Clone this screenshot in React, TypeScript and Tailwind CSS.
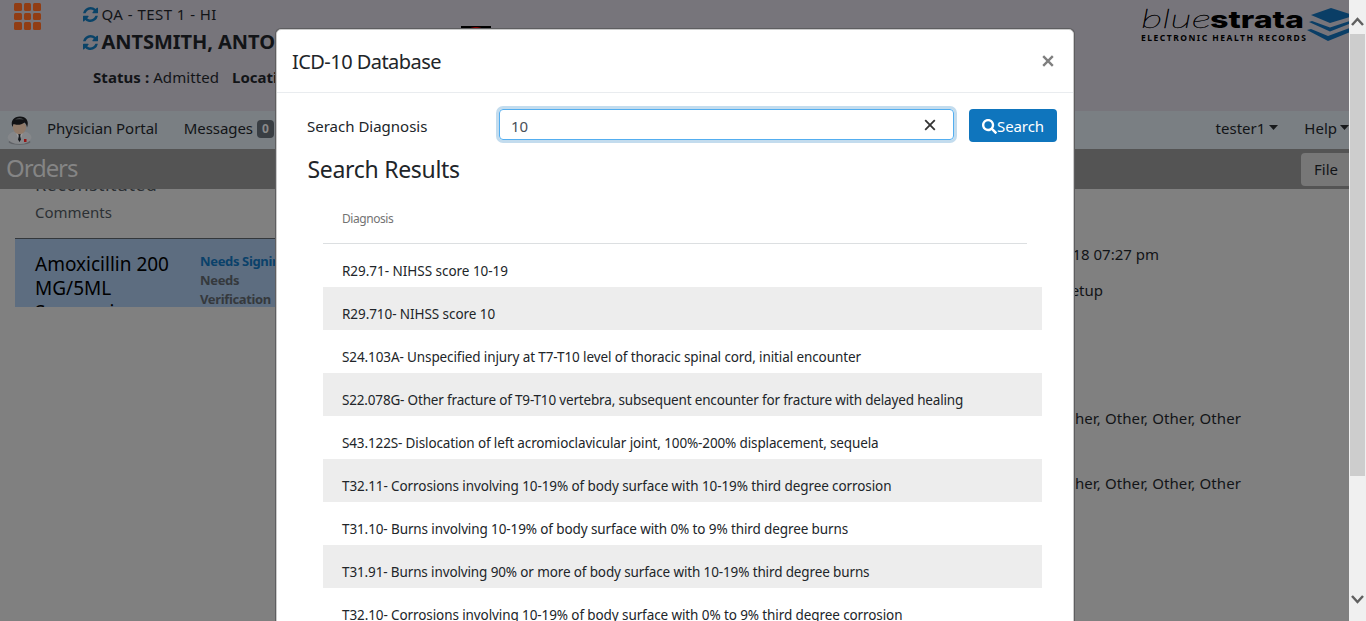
import React from "react";
import { FaSearch } from "react-icons/fa";

const results = [
  { text: "R29.71- NIHSS score 10-19", cls: "tracking-[-0.030px]" },
  { text: "R29.710- NIHSS score 10", cls: "tracking-[-0.070px]" },
  { text: "S24.103A- Unspecified injury at T7-T10 level of thoracic spinal cord, initial encounter", cls: "tracking-[-0.108px]" },
  { text: "S22.078G- Other fracture of T9-T10 vertebra, subsequent encounter for fracture with delayed healing", cls: "tracking-[-0.170px]" },
  { text: "S43.122S- Dislocation of left acromioclavicular joint, 100%-200% displacement, sequela", cls: "tracking-[-0.130px]" },
  { text: "T32.11- Corrosions involving 10-19% of body surface with 10-19% third degree corrosion", cls: "tracking-[-0.095px]" },
  { text: "T31.10- Burns involving 10-19% of body surface with 0% to 9% third degree burns", cls: "tracking-[-0.110px]" },
  { text: "T31.91- Burns involving 90% or more of body surface with 10-19% third degree burns", cls: "tracking-[-0.128px]" },
  { text: "T32.10- Corrosions involving 10-19% of body surface with 0% to 9% third degree corrosion", cls: "tracking-[-0.098px]" },
];

function Refresh() {
  return (
    <svg className="h-[15px] w-[15px] shrink-0" viewBox="0 0 1536 1536" fill="#0a4368">
      <path d="M1511 928q0 5-1 7-64 268-268 434.500T764 1536q-146 0-282.500-55T238 1324l-129 129q-19 19-45 19t-45-19-19-45V960q0-26 19-45t45-19h448q26 0 45 19t19 45-19 45l-137 137q71 66 161 102t187 36q134 0 250-65t186-179q11-17 53-117 8-23 30-23h192q13 0 22.500 9.500t9.500 22.500zm25-800v448q0 26-19 45t-45 19h-448q-26 0-45-19t-19-45 19-45l138-138Q969 256 768 256q-134 0-250 65T332 500q-11 17-53 117-8 23-30 23H50q-13 0-22.500-9.500T18 608v-7q65-268 270-434.500T768 0q146 0 284 55.500T1297 212l130-129q19-19 45-19t45 19 19 45z" />
    </svg>
  );
}

function Doctor() {
  return (
    <svg className="h-[29px] w-[25px] shrink-0" viewBox="0 0 25 29">
      <ellipse cx="12.500" cy="26" rx="11" ry="2.800" fill="#5f6266" />
      <path d="M0.500 22Q1 17 7 15.500L12.500 18.500L18 15.500Q24.500 17 24.500 22Q22 28 12.500 28Q3 28 0.500 22Z" fill="#85878a" />
      <path d="M8.500 15.500L12.500 26L16.500 15.500L12.500 17.500Z" fill="#9c9c9e" />
      <path d="M11.300 18H13.700L13.200 20L14 23.500L12.500 26L11 23.500L11.800 20Z" fill="#15181c" />
      <path d="M6 9Q9 6 13 7Q17 5 19 10Q19.500 15 15.500 17.500Q12.500 19 9.500 17.500Q5.500 15 6 9Z" fill="#907a69" />
      <path d="M5.500 11C3 5 7 0.500 13 0.500C19 0.500 22.500 5 20 11.500C19.800 9 19 8 17.500 6.500C14 9.500 9 9 6.500 8Z" fill="#111214" />
      <path d="M8 3.500Q12.500 0.500 17 3.500Q12.500 2.800 8 3.500Z" fill="#4d5053" />
      <rect x="17" y="23" width="2.500" height="3" fill="#951414" />
    </svg>
  );
}

function Logo() {
  return (
    <svg className="h-[42px] w-[210px] shrink-0" viewBox="0 0 210 42">
      <text x="1" y="28" textLength="70" lengthAdjust="spacingAndGlyphs" className="font-['Lato'] text-[26px] font-thin italic" fill="#000" stroke="#000" strokeWidth="0.4">blue</text>
      <text x="70" y="28" textLength="94" lengthAdjust="spacingAndGlyphs" className="font-['Inter'] text-[24px] font-extrabold" fill="#000">strata</text>
      <text x="1" y="41" textLength="165" className="font-['Noto_Sans'] text-[8.500px] font-bold" fill="#000">ELECTRONIC HEALTH RECORDS</text>
      <g fill="#0a3e66">
        <path d="M171 15L191 8L210 14V17L190 23Z" />
        <path d="M169 22L172 21L190 27.500L210 21V23.500L190 31.500Z" />
        <path d="M167 30L171 29L188 36L210 28V32L188 41Z" />
      </g>
    </svg>
  );
}

function Caret() {
  return (
    <svg className="h-[5px] w-[9px] shrink-0" viewBox="0 0 9 5" fill="#17191b">
      <path d="M0 0H9L4.500 5Z" />
    </svg>
  );
}

function Cross({ className }: { className: string }) {
  return (
    <svg className={className} viewBox="0 0 12 12" fill="none" stroke="currentColor">
      <path d="M1.200 1.200L10.800 10.800M10.800 1.200L1.200 10.800" />
    </svg>
  );
}

export default function App() {
  return (
    <div className="relative flex h-[621px] w-[1366px] overflow-hidden bg-[#808080] font-['Noto_Sans',sans-serif] text-[15px] text-[#121417]">
      <main className="flex w-[1349px] shrink-0 flex-col overflow-hidden">
        <header className="flex h-[111px] shrink-0 bg-[#77757b]">
          <div className="flex w-[461px] shrink-0">
            <div className="grid h-fit grid-cols-3 gap-[2px] pl-[14px] pt-[3px]">
              {Array.from({ length: 9 }, (_, i) => (
                <span key={i} className="h-[7.500px] w-[7.500px] rounded-[1.500px] bg-[#913d14]" />
              ))}
            </div>
            <div className="flex flex-col whitespace-nowrap pl-[42px]">
              <div className="flex h-[28px] items-center gap-1 pt-[1px]">
                <Refresh />
                <span className="tracking-[0.450px]">QA - TEST 1 - HI</span>
              </div>
              <div className="flex h-[28px] items-center gap-1">
                <Refresh />
                <span className="text-[20px] font-bold tracking-[-0.050px]">ANTSMITH, ANTONIO</span>
              </div>
              <div className="flex h-[42px] items-center gap-[13px] pl-[10.500px]">
                <span className="tracking-[0.070px]"><b>Status :</b> Admitted</span>
                <b>Location :</b>
              </div>
            </div>
          </div>
          <div className="mt-[26px] flex h-[30px] w-[30px] justify-center overflow-hidden bg-black">
            <span className="mt-px h-[20px] w-[22px] rounded-full bg-[#850000]" />
          </div>
          <div className="ml-auto flex w-[209px] overflow-hidden"><Logo /></div>
        </header>
        <nav className="flex h-[38px] shrink-0 items-center justify-between whitespace-nowrap bg-[#7a7f83]">
          <div className="flex items-center pb-[3px] pl-[7px]">
            <div className="pt-[4px]"><Doctor /></div>
            <span className="pl-[15px] tracking-[-0.060px]">Physician Portal</span>
            <span className="pl-[26px] tracking-[-0.080px]">Messages</span>
            <span className="ml-1 flex h-[18px] w-[17px] items-center justify-center rounded-[4px] bg-[#393e43] text-[12px] font-bold text-[#8a8a8a]">0</span>
          </div>
          <div className="flex items-center pb-[3px]">
            <span>tester1</span>
            <span className="ml-1 flex pb-[3px]"><Caret /></span>
            <span className="ml-[26px]">Help</span>
            <span className="ml-[3px] flex pb-[3px]"><Caret /></span>
          </div>
        </nav>
        <div className="flex h-10 shrink-0 items-center justify-between bg-[#545454] pl-[6px]">
          <h1 className="pb-[3px] text-[24px] tracking-[-1.100px] text-[#858585]">Orders</h1>
          <div className="flex h-[33px] w-12 items-center rounded-l-[4px] bg-[#777] pl-[13px]">File</div>
        </div>
        <div className="flex grow justify-between">
          <section className="flex h-[118px] w-[300px] flex-col overflow-hidden pl-[15px]">
            <div className="h-[50px] shrink-0 overflow-hidden border-b border-[#33373b] pl-5 text-[#2c3034]">
              <div className="-mt-[17px] h-6 text-[18px] leading-6 tracking-[0.400px]">Reconstituted</div>
              <div className="pt-[4px] leading-6">Comments</div>
            </div>
            <div className="flex h-[68px] shrink-0 overflow-hidden bg-[#5d6d80] pl-5">
              <div className="w-[165px] shrink-0 pt-[13px] text-[19px] leading-6 text-black">Amoxicillin 200<br />MG/5ML<br />Suspension</div>
              <div className="w-[100px] shrink-0 whitespace-nowrap pt-[13px] text-[13px] font-bold leading-[19px] tracking-[-0.350px] text-[#35393d]">
                <div className="text-[#0a416a]">Needs Signing</div>
                <div>Needs<br />Verification</div>
              </div>
            </div>
          </section>
          <section className="flex w-[280px] flex-col whitespace-nowrap pt-[53px] leading-6">
            <div className="-ml-5"><span className="flex w-[110px] justify-end">2018 07:27 pm</span></div>
            <div className="mt-3 flex w-[34px] justify-end">Setup</div>
            <div className="mt-[104px] flex w-[172px] justify-end tracking-[0.100px]">Other, Other, Other, Other</div>
            <div className="mt-[41px] flex w-[172px] justify-end tracking-[0.100px]">Other, Other, Other, Other</div>
          </section>
        </div>
      </main>
      <aside className="flex w-[17px] shrink-0 flex-col items-center bg-[#f0f0f0]">
        <svg className="h-[34px] w-[17px] shrink-0" viewBox="0 0 17 34" fill="none" stroke="#606060" strokeWidth="2.500"><path d="M3 25L8.500 19L14 25" /></svg>
        <div className="h-[442px] w-[15px] shrink-0 bg-[#cdcdcd]" />
        <svg className="mt-auto h-[34px] w-[17px]" viewBox="0 0 17 34" fill="none" stroke="#606060" strokeWidth="2.500"><path d="M3 9L8.500 15L14 9" /></svg>
      </aside>
      <div role="dialog" className="absolute left-[276px] top-[29px] flex h-[640px] w-[798px] flex-col rounded-[5px] border border-[#cbcbcb] bg-white text-[#212529] shadow-[0_0_0_1px_#5e5e60]">
        <div className="flex h-[63px] shrink-0 items-center justify-between border-b border-[#e9ecef] pl-[15px] pr-[19px]">
          <h2 className="pt-[2px] text-[20px] tracking-[-0.550px]">ICD-10 Database</h2>
          <Cross className="h-3 w-3 stroke-[2.400] text-[#7f7f7f]" />
        </div>
        <div className="flex h-[49px] shrink-0 items-start pl-[30px] pr-4 pt-4">
          <label className="w-[192px] pt-[6px]">Serach Diagnosis</label>
          <div className="flex h-[31px] w-[455px] items-center justify-between rounded-[4px] border border-[#53aef0] pl-[11px] pr-[17px] text-[#495057] ring-[3px] ring-[#c3dcee]">
            <span className="pt-1">10</span>
            <Cross className="h-3 w-3 stroke-[1.800] text-[#333]" />
          </div>
          <button className="ml-[15px] flex h-[33px] w-[88px] items-center justify-center rounded-[4px] bg-[#0f75bd] pt-px text-white"><FaSearch className="h-[15px] w-[15px]" /><span className="tracking-[-0.100px]">Search</span></button>
        </div>
        <h3 className="pl-[30.500px] pt-[10px] text-[23px] leading-[34px] tracking-[-0.300px]">Search Results</h3>
        <div className="ml-[46px] mt-[7px] flex w-[719px] flex-col">
          <div className="mr-[15px] h-[51px] border-b border-[#dcdfe1] pl-[19px] pt-[17px] text-[12px] leading-[18px] tracking-[-0.450px] text-[#737373]">Diagnosis</div>
          {results.map((r) => (
            <div key={r.text} className="flex h-[43px] shrink-0 whitespace-nowrap pl-[19px] pt-[17px] text-[13.500px] leading-[20px] odd:bg-[#ededed]">
              <span className={r.cls}>{r.text}</span>
            </div>
          ))}
        </div>
      </div>
    </div>
  );
}
